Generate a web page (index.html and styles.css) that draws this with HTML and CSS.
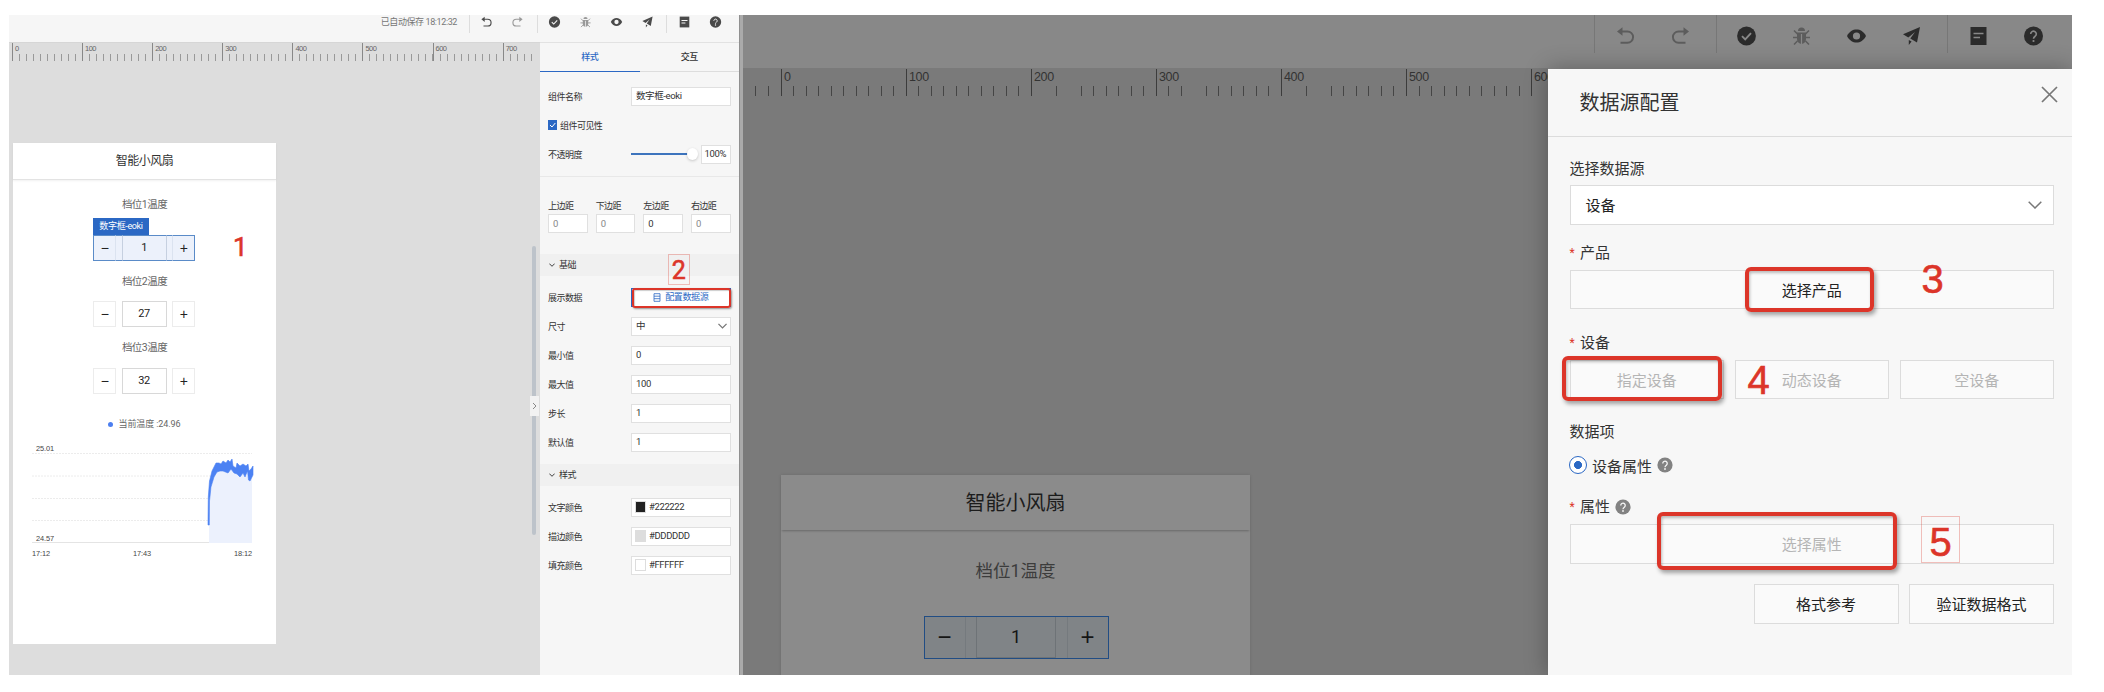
FILE: index.html
```html
<!DOCTYPE html>
<html lang="zh-CN">
<head>
<meta charset="utf-8">
<title>数据源配置</title>
<link rel="stylesheet" href="styles.css">
</head>
<body>
<svg class="defs" width="0" height="0">
  <symbol id="undo" viewBox="0 0 20 20"><path d="M5.500 5.500H12a5.200 5.200 0 0 1 0 11.200H5" fill="none" stroke="currentColor" stroke-width="1.900"/><path d="M7 1.200 1.500 5.500 7 9.800z" fill="currentColor"/></symbol>
  <symbol id="redo" viewBox="0 0 20 20"><path d="M14.500 5.500H8a5.200 5.200 0 0 0 0 11.200h7" fill="none" stroke="currentColor" stroke-width="1.900"/><path d="M13 1.200 18.500 5.500 13 9.800z" fill="currentColor"/></symbol>
  <symbol id="check" viewBox="0 0 20 20"><circle cx="10" cy="10" r="9.400" fill="currentColor"/><path d="m5.500 10.200 3.200 3.200 5.800-6.200" fill="none" stroke="var(--bg)" stroke-width="1.900"/></symbol>
  <symbol id="bug" viewBox="0 0 20 20"><path d="M6.500 5a3.500 3.500 0 0 1 7 0zM5.500 6.500h9V13a4.500 5 0 0 1-9 0z" fill="currentColor"/><path d="M2.500 4.500 6 8M17.500 4.500 14 8M1.500 11.500h17M2.500 18.500 6 15M17.500 18.500 14 15" stroke="currentColor" stroke-width="1.500"/><path d="M10 8v10" stroke="var(--bg)" stroke-width="1.200"/></symbol>
  <symbol id="eye" viewBox="0 0 20 20"><path d="M.5 10C3 5.300 6.200 3.500 10 3.500s7 1.800 9.500 6.500c-2.500 4.700-5.700 6.500-9.500 6.500S3 14.700.5 10z" fill="currentColor"/><circle cx="10" cy="10" r="3.600" fill="var(--bg)"/></symbol>
  <symbol id="plane" viewBox="0 0 20 20"><path d="M18.500 1 1.500 8.200l5.300 3.300L13.500 6 8.800 12.600 15.500 16.500zM7.300 14v5l2.800-3.400z" fill="currentColor"/></symbol>
  <symbol id="doc" viewBox="0 0 20 20"><path d="M2 1h16v18H2z" fill="currentColor"/><path d="M5 7.500h10M5 11.500h6.500" stroke="var(--bg)" stroke-width="1.700"/></symbol>
  <symbol id="help" viewBox="0 0 20 20"><circle cx="10" cy="10" r="9.500" fill="currentColor"/><path d="M7.200 8a2.800 2.800 0 1 1 4.500 2.200c-1.100.8-1.700 1.200-1.700 2.600" fill="none" stroke="var(--bg)" stroke-width="1.600"/><circle cx="10" cy="15" r="1.100" fill="var(--bg)"/></symbol>
  <symbol id="chev" viewBox="0 0 14 8"><path d="m.7.700 6.300 6.300L13.300.700" fill="none" stroke="currentColor" stroke-width="var(--sw,1.500)"/></symbol>
</svg>
<main class="page">
  <section class="editor">
    <header class="bar">
      <span class="saved">已自动保存 18:12:32</span>
      <i class="sep s1"></i>
      <svg class="ic"><use href="#undo"/></svg><svg class="ic dim"><use href="#redo"/></svg>
      <i class="sep s2"></i>
      <svg class="ic"><use href="#check"/></svg><svg class="ic dim"><use href="#bug"/></svg><svg class="ic"><use href="#eye"/></svg><svg class="ic"><use href="#plane"/></svg>
      <i class="sep s3"></i>
      <svg class="ic"><use href="#doc"/></svg><svg class="ic"><use href="#help"/></svg>
    </header>
    <div class="work">
      <div class="canvas">
        <div class="ruler"><span>0</span><span>100</span><span>200</span><span>300</span><span>400</span><span>500</span><span>600</span><span>700</span></div>
        <div class="phone">
          <h1>智能小风扇</h1>
          <p class="gear">档位1温度</p>
          <div class="stepper sel"><b class="tag">数字框-eoki</b><span>−</span><span class="val">1</span><span>+</span></div>
          <p class="gear g2">档位2温度</p>
          <div class="stepper"><span>−</span><span class="val">27</span><span>+</span></div>
          <p class="gear g3">档位3温度</p>
          <div class="stepper"><span>−</span><span class="val">32</span><span>+</span></div>
          <p class="legend"><i></i>当前温度 :24.96</p>
          <div class="chart">
            <svg width="222" height="92" viewBox="0 0 222 92">
              <path d="M0 2.500h220M0 25h220M0 47.500h220M0 69.500h220" stroke="#ececec" stroke-dasharray="2 1"/><path d="M0 91.500h220" stroke="#e4e4e4"/>
              <path d="M177 92V74L178 45 182 24 190 16 200 14 206 20 220 28V92z" fill="#ecf1fd"/>
              <path d="M176 74 176.300 46 177.500 30 180 20 184 12 187 12 189 13 191 10 194 12 196 9 198 11 200 8 201 15 204 17 205 12 208 15 211 13 214 15 216 13 217 20 219 18 221 15V24L218 30 216.500 29 215.500 20 213 26 211 22 208 26 205 23 202 22 199 18 196 22 191 20 188 20 185 21 182 26 179 36 177.500 50 177.300 74z" fill="#4c82f3" stroke="#4c82f3" stroke-width=".6"/>
            </svg>
            <span class="ymax">25.01</span><span class="ymin">24.57</span>
            <div class="xs"><span>17:12</span><span>17:43</span><span>18:12</span></div>
          </div>
        </div>
        <i class="scroll"></i><span class="toggle"><svg width="5" height="8" viewBox="0 0 5 8"><path d="m1 1 3 3-3 3" fill="none" stroke="#888"/></svg></span>
        <em class="num n1">1</em>
      </div>
      <aside class="panel">
        <nav><b class="on">样式</b><b>交互</b></nav>
        <div class="row r-name"><label>组件名称</label><span class="inp">数字框-eoki</span></div>
        <div class="row vis"><svg class="cb" viewBox="0 0 9 10"><path d="M0 0h9v10H0z" fill="#2b68c4"/><path d="m2 5 2 2 3.300-4" fill="none" stroke="#fff"/></svg><label>组件可见性</label></div>
        <div class="row op"><label>不透明度</label><span class="slider"><i></i></span><span class="inp pct">100%</span></div>
        <div class="margins">
          <div><label>上边距</label><span class="inp ph">0</span></div><div><label>下边距</label><span class="inp ph">0</span></div><div><label>左边距</label><span class="inp">0</span></div><div><label>右边距</label><span class="inp ph">0</span></div>
        </div>
        <h2><svg class="fold"><use href="#chev"/></svg>基础</h2>
        <div class="rows">
          <div class="row"><label>展示数据</label><span class="inp src"><svg width="8" height="9" viewBox="0 0 8 9"><path d="M1 .7h6v7.600H1zM1 3.200h6M1 5.700h6" fill="none" stroke="currentColor" stroke-width=".8"/></svg>配置数据源</span></div>
          <div class="row"><label>尺寸</label><span class="inp drop">中<svg class="arrow"><use href="#chev"/></svg></span></div>
          <div class="row"><label>最小值</label><span class="inp">0</span></div>
          <div class="row"><label>最大值</label><span class="inp">100</span></div>
          <div class="row"><label>步长</label><span class="inp">1</span></div>
          <div class="row"><label>默认值</label><span class="inp">1</span></div>
        </div>
        <h2><svg class="fold"><use href="#chev"/></svg>样式</h2>
        <div class="rows colors">
          <div class="row"><label>文字颜色</label><span class="inp"><i class="sw dark"></i>#222222</span></div>
          <div class="row"><label>描边颜色</label><span class="inp"><i class="sw grey"></i>#DDDDDD</span></div>
          <div class="row"><label>填充颜色</label><span class="inp"><i class="sw white"></i>#FFFFFF</span></div>
        </div>
        <em class="num n2">2</em><i class="mark m2"></i>
      </aside>
    </div>
  </section>
  <i class="gutter"></i>
  <section class="shade">
    <header class="bar">
      <i class="sep s1"></i>
      <svg class="ic dim"><use href="#undo"/></svg><svg class="ic dim"><use href="#redo"/></svg>
      <i class="sep s2"></i>
      <svg class="ic"><use href="#check"/></svg><svg class="ic dim"><use href="#bug"/></svg><svg class="ic"><use href="#eye"/></svg><svg class="ic"><use href="#plane"/></svg>
      <i class="sep s3"></i>
      <svg class="ic"><use href="#doc"/></svg><svg class="ic"><use href="#help"/></svg>
    </header>
    <div class="stage">
      <div class="board">
        <div class="ruler"><span class="lead"></span><span>0</span><span>100</span><span>200</span><span>300</span><span>400</span><span>500</span><span>600</span></div>
        <div class="phone">
          <h1>智能小风扇</h1>
          <p class="gear">档位1温度</p>
          <div class="stepper sel"><span>−</span><span class="val">1</span><span>+</span></div>
        </div>
      </div>
      <div class="drawer">
        <div class="head"><h3>数据源配置</h3><svg width="17" height="17" viewBox="0 0 17 17"><path d="m1 1 15 15M16 1 1 16" stroke="#777" stroke-width="1.700"/></svg></div>
        <div class="form">
          <label>选择数据源</label>
          <div class="box select">设备<svg class="arrow"><use href="#chev"/></svg></div>
          <label class="req">产品</label>
          <div class="box">选择产品<i class="mark m3"></i><em class="num n3">3</em></div>
          <label class="req device">设备</label>
          <div class="three"><div class="box off">指定设备<i class="mark m4"></i></div><div class="box off">动态设备<em class="num n4">4</em></div><div class="box off">空设备</div></div>
          <label class="items">数据项</label>
          <div class="radio"><i></i>设备属性<svg class="q"><use href="#help"/></svg></div>
          <label class="req attr">属性<svg class="q"><use href="#help"/></svg></label>
          <div class="box off">选择属性<i class="mark m5"></i><em class="num n5">5</em></div>
          <div class="acts"><div class="box">格式参考</div><div class="box">验证数据格式</div></div>
        </div>
      </div>
    </div>
  </section>
</main>
</body>
</html>
```

FILE: styles.css
```css
* { box-sizing: border-box; }
body { margin: 0; background: #fff; font-family: Roboto, "Noto Sans CJK SC", sans-serif; color: #333; }
h1, h2, h3, p { margin: 0; font-weight: 400; }
i, em { font-style: normal; }
.defs { position: absolute; }
.page { width: 2104px; height: 692px; padding: 15px 0 0 9px; display: flex; align-items: flex-start; overflow: hidden; }
.num { position: absolute; color: #dc3529; font-family: "Liberation Sans", sans-serif; letter-spacing: 0; line-height: 1; -webkit-text-stroke: .6px #dc3529; }
.mark { position: absolute; border: 4px solid #dc3529; border-radius: 6px; box-shadow: 2px 3px 4px rgba(0,0,0,.35), inset 1px 2px 3px rgba(0,0,0,.25); }

/* editor */
.editor { width: 730px; height: 660px; font-size: 9px; letter-spacing: -.06em; --bg: #f6f6f6; background: #f6f6f6; }
.bar { display: flex; justify-content: flex-end; }
.editor .bar { height: 27px; padding-right: 8.500px; color: #4a4a4a; }
.saved { line-height: 15px; color: #777; margin-right: 12px; letter-spacing: -.045em; }
.sep { width: 1px; background: #ddd; height: 18px; }
.editor .ic { width: 31px; height: 12px; margin-top: 1px; }
.editor .dim { color: #999; }
.editor .s1 { margin-right: 1px; }
.editor .s2 { margin: 0 1px 0 4px; }
.editor .s3 { margin: 0 1.500px 0 3px; }
.work { display: flex; height: 633px; }
.canvas { width: 531px; background: #ddd; position: relative; border-top: 1px solid #d6d6d6; overflow: hidden; }
.ruler { display: flex; overflow: hidden; font-family: "Liberation Sans", sans-serif; }
.ruler span { flex: none; border-left: 1px solid #888; }
.editor .ruler { padding-left: 3px; height: 18px; width: 526px; color: #666; font-size: 7.500px; }
.editor .ruler span { width: 70.100px; padding-left: 2px; line-height: 11px; background: repeating-linear-gradient(90deg, transparent 0 6.010px, #999 6.010px 7.010px) left bottom / 100% 7px no-repeat; }
.editor .phone { width: 263px; height: 501px; margin: 82px 0 0 4px; background: #fff; display: flex; flex-direction: column; align-items: center; }
.phone h1 { width: 100%; text-align: center; }
.editor h1 { height: 37px; line-height: 37px; font-size: 12px; border-bottom: 1px solid #e3e3e3; box-shadow: 0 1px 2px rgba(0,0,0,.06); }
.editor .gear { font-size: 10.500px; line-height: 16px; color: #666; margin-top: 17px; }
.editor .g2 { margin-top: 13px; }
.editor .g3 { margin-top: 13px; }
.stepper { display: flex; justify-content: space-between; position: relative; }
.editor .stepper { width: 102px; height: 26px; margin-top: 11.500px; font-size: 11px; line-height: 24px; text-align: center; color: #222; left: -.5px; }
.editor .stepper.sel { margin-top: 21.500px; }
.editor .stepper span { width: 23px; border: 1px solid #ececec; font-size: 14px; font-family: "Liberation Sans", sans-serif; }
.editor .stepper .val { width: 45px; border-color: #d8d8d8; font-size: 11px; font-family: Roboto, sans-serif; }
.editor .sel { background: #ecf1fb; box-shadow: inset 0 0 0 1px #5a8bc8; }
.editor .stepper.sel span { border-color: transparent #dbe3f0; background: none; }
.editor .stepper.sel span:nth-of-type(1) { border-left-color: #5a8bc8; }
.editor .stepper.sel span:last-child { border-right-color: #5a8bc8; }
.editor .stepper.sel .val { border-color: transparent #c6d0e0; }
.tag { position: absolute; left: 0; top: -16.500px; width: 56px; height: 17px; background: #2b68c4; color: #fff; font-size: 9px; line-height: 17px; font-weight: 400; letter-spacing: -.04em; }
.legend { display: flex; align-items: center; margin-top: 23.500px; line-height: 14px; color: #666; gap: 5px; white-space: pre; letter-spacing: -.01em; }
.legend i { width: 5px; height: 5px; border-radius: 50%; background: #4c7ff0; }
.chart { position: relative; left: -1.500px; width: 222px; height: 110px; margin-top: 19.500px; font: 7.400px "Liberation Sans", sans-serif; letter-spacing: -.01em; color: #444; }
.chart svg { display: block; }
.ymax, .ymin { position: absolute; left: 4px; top: -6.500px; }
.ymin { top: 83px; }
.xs { display: flex; justify-content: space-between; width: 220px; margin-top: 6px; }
.scroll { position: absolute; left: 523px; top: 203px; width: 4px; height: 289px; border-radius: 2px; background: #bdc3ca; }
.toggle { position: absolute; left: 521px; top: 353px; width: 9px; height: 20px; background: #f2f2f2; display: grid; place-items: center; }
.n1 { left: 224px; top: 191px; font-size: 26px; font-family: Roboto, sans-serif; }

.panel { width: 199px; position: relative; border-top: 1px solid #e2e2e2; color: #333; }
nav { display: flex; height: 29px; }
nav b { flex: 1; text-align: center; line-height: 29px; font-weight: 500; border-bottom: 1.500px solid #ddd; }
nav .on { color: #2b68c4; border-color: #2b68c4; }
.row { display: flex; align-items: center; justify-content: space-between; padding: 0 8.500px 0 8px; height: 19px; }
.inp { width: 99.500px; height: 19px; border: 1px solid #e0e0e0; background: #fff; padding-left: 4px; line-height: 18px; display: flex; align-items: center; font-size: 9.500px; letter-spacing: -.04em; }
.r-name { margin-top: 14.500px; }
.vis { margin-top: 10px; justify-content: flex-start; gap: 3px; }
.cb { width: 9px; height: 10px; }
.op { margin-top: 10px; }
.op label { width: 83px; }
.slider { width: 57px; height: 2px; background: #3d74bd; margin-right: auto; position: relative; }
.slider i { position: absolute; right: -10px; top: -5px; width: 11px; height: 12px; border-radius: 50%; background: #fff; box-shadow: 0 1px 3px rgba(0,0,0,.2); }
.op .pct { width: 30px; padding-left: 3px; }
.margins { display: flex; gap: 8px; margin-top: 12px; border-top: 1px solid #e8e8e8; padding: 22px 8.500px 0 8px; height: 78px; }
.margins div { flex: 1; }
.margins label { display: block; line-height: 15px; margin-bottom: .5px; }
.margins .inp { width: auto; }
.ph { color: #888; }
h2 { height: 22px; background: #f0f0f0; display: flex; align-items: center; padding-left: 9px; gap: 4px; font-size: 9px; }
.fold { width: 6px; height: 4px; --sw: 2.200; }
.rows { padding-top: 12px; display: flex; flex-direction: column; gap: 10px; height: 188px; }
.src { border-color: #2b68c4; color: #2b68c4; justify-content: center; padding: 0; gap: 4px; font-size: 9px; }
.drop { justify-content: space-between; padding-right: 3px; }
.drop .arrow { width: 9px; height: 6px; color: #777; --sw: 2; }
.sw { width: 11px; height: 12px; margin: 0 3px 0 -1px; border: 1px solid #ddd; }
.dark { background: #222; }
.grey { background: #ddd; }
.n2 { left: 128px; top: 211px; width: 21.500px; height: 31px; border: 1px solid rgba(220,53,41,.3); font-size: 25px; line-height: 32px; text-align: center; font-family: Roboto, sans-serif; }
.m2 { left: 91.500px; top: 245px; width: 99px; height: 20px; border-width: 2px; border-radius: 3px; box-shadow: 1px 1px 2px rgba(0,0,0,.4), inset 1px 1px 1px rgba(0,0,0,.2); }

.gutter { width: 4px; height: 660px; background: #aaa; border-left: 1px solid #909090; }

/* dimmed editor with drawer */
.shade { width: 1329px; height: 660px; background: #888; --bg: #888; overflow: hidden; }
.shade .bar { height: 53px; padding-right: 11.500px; color: #2b2b2b; }
.shade .ic { width: 55px; height: 20px; margin-top: 10.500px; }
.shade .dim { color: #5c5c5c; }
.shade .sep { height: 38px; background: #777; }
.shade .s1 { margin-right: 2.500px; }
.shade .s2 { margin: 0 2.500px 0 8px; }
.shade .s3 { margin: 0 2.500px 0 8px; }
.stage { display: flex; height: 607px; position: relative; }
.board { width: 805px; background: #7a7a7a; padding-top: 1px; }
.shade .ruler { height: 27px; font-size: 12.500px; color: #333; letter-spacing: -.03em; }
.shade .ruler span { width: 125px; border-color: #3c3c3c; padding-left: 2.500px; line-height: 16px; background: repeating-linear-gradient(90deg, transparent 0 11.500px, #454545 11.500px 12.500px) left bottom / 100% 10px no-repeat; }
.shade .ruler .lead { width: 37.500px; border: 0; background-position: 1px 100%; }
.shade .phone { margin: 379px 0 0 38px; width: 469px; height: 201px; background: #8b8b8b; display: flex; flex-direction: column; align-items: center; box-shadow: 0 0 3px rgba(0,0,0,.12); }
.shade h1 { height: 55px; line-height: 56px; font-size: 20px; color: #1c1c1c; box-shadow: 0 2px 2px -1px rgba(0,0,0,.25); }
.shade .gear { font-size: 17.500px; line-height: 26px; color: #3c3c3c; margin-top: 28px; }
.shade .stepper { width: 185px; height: 43px; margin-top: 31.500px; border: 1.500px solid #214d84; background: #808487; font-size: 18px; line-height: 40px; text-align: center; color: #151515; left: .5px; }
.shade .stepper span { width: 41px; border-right: 1px solid #757a7e; font-size: 24px; font-family: "Liberation Sans", sans-serif; }
.shade .stepper span:last-child { border: 0; border-left: 1px solid #757a7e; }
.shade .stepper .val { width: 80px; border: 1px solid #6e7377; border-top: 0; font-size: 18px; font-family: Roboto, sans-serif; }

.drawer { width: 524px; height: 606px; margin-top: 1px; background: #f7f7f7; position: relative; box-shadow: 0 0 22px rgba(0,0,0,.3); --bg: #f7f7f7; font-size: 15px; color: #333; }
.head { height: 68px; border-bottom: 1px solid #dcdcdc; display: flex; justify-content: space-between; padding: 17px 14px 0 31.500px; }
.head h3 { font-size: 20px; line-height: 34px; }
.form { padding: 21px 18px 0 21.500px; display: flex; flex-direction: column; }
.form label { height: 22px; line-height: 22px; margin-bottom: 5px; display: flex; align-items: center; }
.form .req { margin-top: 17px; margin-bottom: 6px; }
.form .device { margin-top: 22.500px; }
.req::before { content: "*"; color: #dc3529; width: 10.500px; font-size: 12px; height: 22px; }
.box { position: relative; height: 39.500px; border: 1px solid #dcdcdc; background: #fafafa; display: flex; align-items: center; justify-content: center; color: #222; }
.select { background: #fff; justify-content: space-between; padding: 0 11px 0 15px; }
.select .arrow { width: 14px; height: 8px; color: #777; }
.three { display: grid; grid-template-columns: repeat(3, 1fr); gap: 10.500px; }
.off { color: #b5b5b5; }
.form .items { margin-top: 21.500px; }
.radio { display: flex; align-items: center; height: 32px; gap: 5px; margin-top: 1.500px; }
.radio i { width: 18px; height: 18px; border: 1.500px solid #2b68c4; border-radius: 50%; background: radial-gradient(circle, #2b68c4 0 3.700px, #fff 4.300px); margin-left: -.5px; }
.q { width: 16px; height: 16px; color: #828282; }
.form .attr { margin-top: 15px; }
.attr .q { margin-left: 5px; }
.acts { display: flex; justify-content: flex-end; gap: 10.500px; margin-top: 20.500px; }
.acts .box { width: 145px; }
.n3, .n4, .n5 { font-size: 40px; }
.m3 { left: 174.500px; top: -4px; width: 129px; height: 45px; }
.n3 { left: 351px; top: -12px; }
.m4 { left: -9px; top: -5px; width: 160px; height: 45px; }
.n4 { left: 12px; top: -1px; }
.m5 { left: 86px; top: -13px; width: 240px; height: 58px; }
.n5 { left: 350.500px; top: -9px; width: 39px; height: 47px; border: 1px solid rgba(220,53,41,.3); line-height: 50px; text-align: center; }
```
